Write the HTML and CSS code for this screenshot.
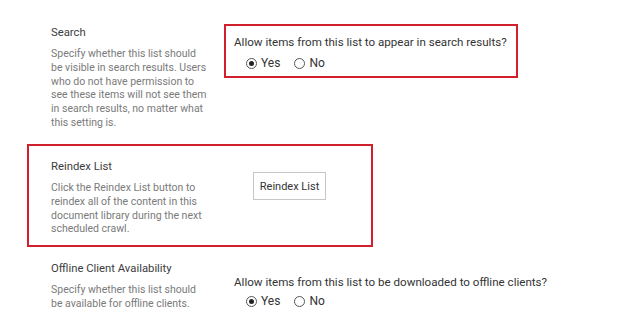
FILE: index.html
```html
<!DOCTYPE html>
<html>
<head>
<meta charset="utf-8">
<link rel="stylesheet" href="styles.css">
</head>
<body>
<div class="page">
  <section class="row row-search">
    <div class="label-col">
      <h3 class="title">Search</h3>
      <p class="desc">Specify whether this list should be visible in search results. Users who do not have permission to see these items will not see them in search results, no matter what this setting is.</p>
    </div>
    <div class="control-col">
      <div class="control highlight">
        <div class="question">Allow items from this list to appear in search results?</div>
        <div class="radios">
          <span class="radio"><span class="dot checked"></span>Yes</span>
          <span class="radio"><span class="dot"></span>No</span>
        </div>
      </div>
    </div>
  </section>

  <section class="row row-reindex highlight">
    <div class="label-col">
      <h3 class="title">Reindex List</h3>
      <p class="desc">Click the Reindex List button to reindex all of the content in this document library during the next scheduled crawl.</p>
    </div>
    <div class="control-col">
      <div class="control">
        <button class="btn">Reindex List</button>
      </div>
    </div>
  </section>

  <section class="row row-offline">
    <div class="label-col">
      <h3 class="title">Offline Client Availability</h3>
      <p class="desc">Specify whether this list should be available for offline clients.</p>
    </div>
    <div class="control-col">
      <div class="control">
        <div class="question">Allow items from this list to be downloaded to offline clients?</div>
        <div class="radios">
          <span class="radio"><span class="dot checked"></span>Yes</span>
          <span class="radio"><span class="dot"></span>No</span>
        </div>
      </div>
    </div>
  </section>
</div>
</body>
</html>
```

FILE: styles.css
```css
* { box-sizing: border-box; }
html, body { margin: 0; padding: 0; background: #fff; }
body {
  font-family: Roboto, "Liberation Sans", sans-serif;
  color: #444;
  width: 624px;
  height: 327px;
  overflow: hidden;
}
.page {
  padding: 14px 0 0 27px;
  display: flex;
  flex-direction: column;
}
.row {
  display: flex;
  width: 346px;
  border: 2px solid transparent;
  padding: 0 0 0 22px;
}
.highlight { border: 2px solid #d21f2c; }
.label-col {
  width: 158px;
  flex: none;
}
.title {
  margin: 0;
  font-size: 11.3px;
  font-weight: 400;
  line-height: 16px;
  color: #3c3c3c;
}
.desc {
  margin: 6px 0 0;
  font-size: 10.5px;
  line-height: 13.8px;
  color: #7a7a7a;
}
.control-col {
  margin-left: 25px;
  flex: none;
}
.row-search { padding-top: 9px; height: 130px; }
.row-search .control {
  width: 294px;
  margin-left: -10px;
  margin-top: -1px;
  padding: 8px 0 0 8px;
  height: 54px;
}
.question {
  font-size: 11.6px;
  line-height: 16px;
  color: #333;
  white-space: nowrap;
}
.radios {
  display: flex;
  gap: 14px;
  padding-left: 12px;
  margin-top: 5px;
  font-size: 12px;
  line-height: 16px;
  color: #333;
}
.radio { display: flex; align-items: center; }
.dot {
  width: 11px;
  height: 11px;
  border: 1px solid #555;
  border-radius: 50%;
  margin-right: 4px;
  position: relative;
  display: inline-block;
}
.dot.checked::after {
  content: "";
  position: absolute;
  left: 2px; top: 2px;
  width: 5px; height: 5px;
  border-radius: 50%;
  background: #222;
}
.row-reindex {
  margin-top: 0;
  padding-top: 13px;
  height: 103px;
}
.row-reindex .control { padding: 13px 0 0 19px; }
.btn {
  font-family: inherit;
  font-size: 11px;
  color: #333;
  background: #fff;
  border: 1px solid #c6c6c6;
  width: 73px;
  height: 28px;
  padding: 0;
}
.row-offline { padding-top: 12px; }
.row-offline .control { padding-top: 13px; }
.row-offline .radios { margin-top: 3px; }
```
